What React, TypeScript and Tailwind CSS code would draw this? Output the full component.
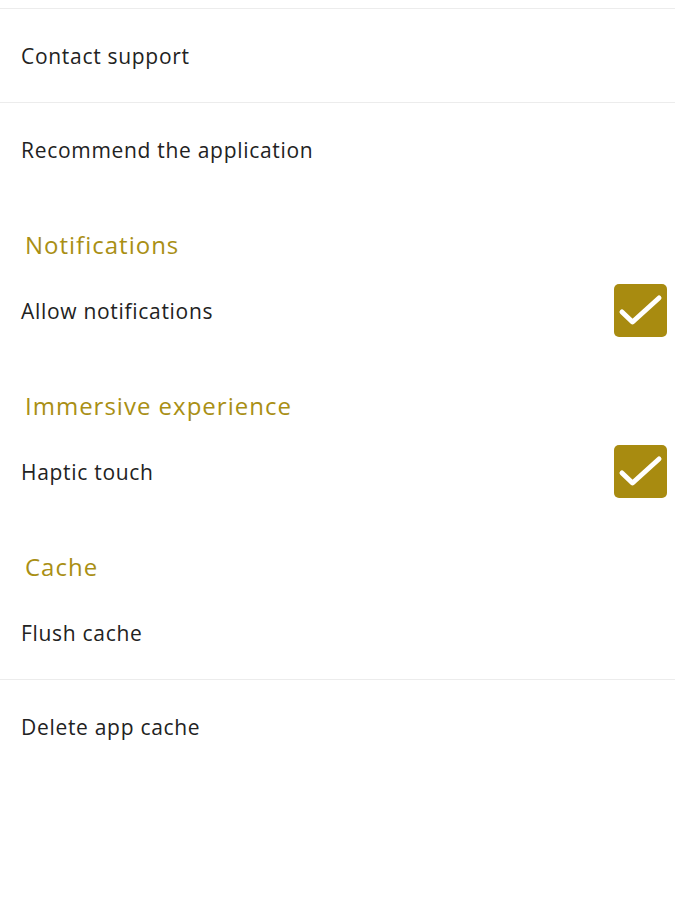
const SECTIONS = [
  { title: 'Notifications', items: [{ label: 'Allow notifications', checked: true }] },
  { title: 'Immersive experience', items: [{ label: 'Haptic touch', checked: true }] },
];

function Check() {
  return (
    <div className="w-[53px] h-[53px] rounded-[5px] bg-[#a88b10] shrink-0 -translate-y-px">
      <svg width="53" height="53" viewBox="0 0 53 53">
        <path d="M8 28 L18.5 38 L45 14" fill="none" stroke="#fff" strokeWidth="5" strokeLinecap="round" strokeLinejoin="round" />
      </svg>
    </div>
  );
}

function Row({ label, checked, divider }: { label: string; checked?: boolean; divider?: boolean }) {
  return (
    <div className={`h-[94px] flex items-center justify-between pl-[21px] pr-[8px] ${divider ? 'border-b border-[#ececec]' : ''}`}>
      <span className="text-[21px] tracking-[0.7px] text-[#222] pt-[2px]">{label}</span>
      {checked && <Check />}
    </div>
  );
}

function Heading({ title }: { title: string }) {
  return (
    <div className="h-[67px] pt-[32px] pl-[25px]">
      <div className="text-[24px] leading-[32px] tracking-[1px] text-[#a98f14]">{title}</div>
    </div>
  );
}

export default function App() {
  return (
    <div className="w-[675px] h-[900px] bg-white font-['Open_Sans',sans-serif] overflow-hidden">
      <div className="h-[9px] border-b border-[#ececec]" />
      <Row label="Contact support" divider />
      <Row label="Recommend the application" />
      {SECTIONS.map((s) => (
        <div key={s.title}>
          <Heading title={s.title} />
          {s.items.map((it) => (
            <Row key={it.label} label={it.label} checked={it.checked} />
          ))}
        </div>
      ))}
      <Heading title="Cache" />
      <Row label="Flush cache" divider />
      <Row label="Delete app cache" />
    </div>
  );
}
